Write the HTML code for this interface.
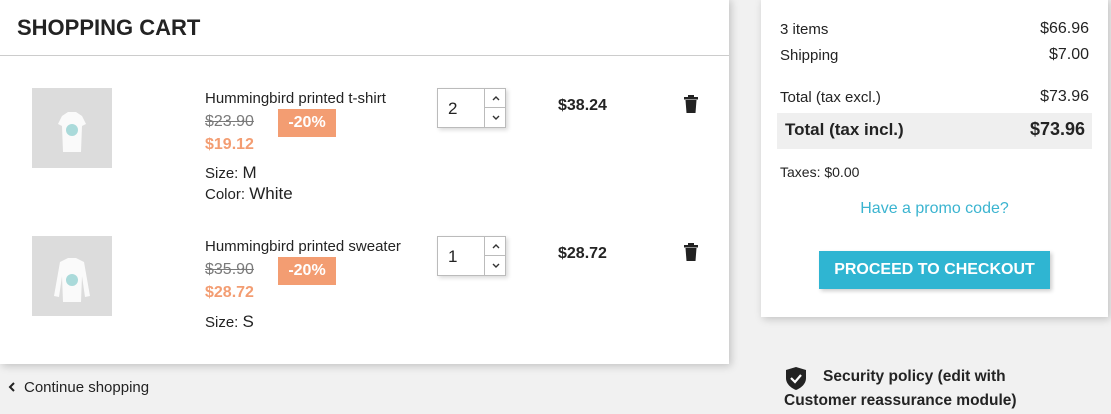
<!DOCTYPE html>
<html><head><meta charset="utf-8"><style>
*{margin:0;padding:0;box-sizing:border-box}
body{width:1111px;height:414px;background:#f1f1f1;font-family:"Liberation Sans",sans-serif;color:#232323;position:relative;overflow:hidden;font-size:15px}
.abs{position:absolute;white-space:nowrap}
.card{background:#fff;box-shadow:2px 2px 8px rgba(0,0,0,.2)}
.img{background:#dcdcdc;width:80px;height:80px}
.qty{width:69px;height:40px;border:1px solid #bbb;background:#fff;box-shadow:2px 2px 4px rgba(0,0,0,.15)}
.qty .n{position:absolute;left:10px;top:10px;font-size:17px}
.qty .s{position:absolute;left:46px;top:0;width:22px;height:38px;border-left:1px solid #bbb}
.qty .s div{height:19px;display:flex;align-items:center;justify-content:center}
.qty .s div:first-child{border-bottom:1px solid #bbb}
.badge{background:#f39d72;color:#fff;font-weight:bold;font-size:16px;text-align:center;line-height:28px;width:58px;height:28px}
.old{color:#7a7a7a;text-decoration:line-through;font-size:16px}
.new{color:#f39d72;font-weight:bold;font-size:16px}
</style></head><body>
<div class="abs card" style="left:0;top:-2px;width:729px;height:366px"></div>
<div class="abs" style="left:17px;top:15px;font-size:22px;font-weight:bold">SHOPPING CART</div>
<div class="abs" style="left:0;top:55px;width:729px;height:1px;background:#ccc"></div>

<div class="abs img" style="left:32px;top:88px"><svg width="80" height="80"><path d="M30 28 L36 24 L44 24 L50 28 L54 36 L50 38 L49 64 L31 64 L30 38 L26 36Z" fill="#fafafa"/><circle cx="40" cy="42" r="6" fill="#8cc" opacity=".7"/></svg></div>
<div class="abs" style="left:205px;top:90px;font-size:15px">Hummingbird printed t-shirt</div>
<div class="abs old" style="left:205px;top:113px">$23.90</div>
<div class="abs badge" style="left:278px;top:109px">-20%</div>
<div class="abs new" style="left:205px;top:136px">$19.12</div>
<div class="abs" style="left:205px;top:163px">Size: <span style="font-size:17px">M</span></div>
<div class="abs" style="left:205px;top:184px">Color: <span style="font-size:17px">White</span></div>
<div class="abs qty" style="left:437px;top:88px"><span class="n">2</span><div class="s"><div><svg width="8" height="5"><path d="M1 4 L4 1 L7 4" stroke="#333" stroke-width="1.4" fill="none"/></svg></div><div><svg width="8" height="5"><path d="M1 1 L4 4 L7 1" stroke="#333" stroke-width="1.4" fill="none"/></svg></div></div></div>
<div class="abs" style="left:558px;top:97px;font-weight:bold;font-size:16px">$38.24</div>
<svg class="abs" style="left:684px;top:95px" width="14" height="18"><rect x="0" y="2" width="14" height="2.5" fill="#222"/><rect x="4" y="0" width="6" height="2" fill="#222"/><path d="M1.5 5 H12.5 L11.5 18 H2.5Z" fill="#222"/></svg>

<div class="abs img" style="left:32px;top:236px"><svg width="80" height="80"><path d="M28 26 L36 22 L44 22 L52 26 L58 60 L53 61 L50 40 L49 66 L31 66 L30 40 L27 61 L22 60Z" fill="#fafafa"/><circle cx="40" cy="44" r="6" fill="#8cc" opacity=".7"/></svg></div>
<div class="abs" style="left:205px;top:238px">Hummingbird printed sweater</div>
<div class="abs old" style="left:205px;top:261px">$35.90</div>
<div class="abs badge" style="left:278px;top:257px">-20%</div>
<div class="abs new" style="left:205px;top:284px">$28.72</div>
<div class="abs" style="left:205px;top:312px">Size: <span style="font-size:17px">S</span></div>
<div class="abs qty" style="left:437px;top:236px"><span class="n">1</span><div class="s"><div><svg width="8" height="5"><path d="M1 4 L4 1 L7 4" stroke="#333" stroke-width="1.4" fill="none"/></svg></div><div><svg width="8" height="5"><path d="M1 1 L4 4 L7 1" stroke="#333" stroke-width="1.4" fill="none"/></svg></div></div></div>
<div class="abs" style="left:558px;top:245px;font-weight:bold;font-size:16px">$28.72</div>
<svg class="abs" style="left:684px;top:243px" width="14" height="18"><rect x="0" y="2" width="14" height="2.5" fill="#222"/><rect x="4" y="0" width="6" height="2" fill="#222"/><path d="M1.5 5 H12.5 L11.5 18 H2.5Z" fill="#222"/></svg>

<div class="abs" style="left:8px;top:379px;font-size:15px"><svg width="8" height="10" style="margin-right:8px"><path d="M6 1 L2 5 L6 9" stroke="#232323" stroke-width="2" fill="none"/></svg>Continue shopping</div>

<div class="abs card" style="left:761px;top:-2px;width:347px;height:319px"></div>
<div class="abs" style="left:780px;top:21px">3 items</div><div class="abs" style="right:22px;top:20px;font-size:16px">$66.96</div>
<div class="abs" style="left:780px;top:47px">Shipping</div><div class="abs" style="right:22px;top:46px;font-size:16px">$7.00</div>
<div class="abs" style="left:780px;top:89px">Total (tax excl.)</div><div class="abs" style="right:22px;top:88px;font-size:16px">$73.96</div>
<div class="abs" style="left:777px;top:113px;width:315px;height:36px;background:#efefef"></div>
<div class="abs" style="left:785px;top:120px;font-weight:bold;font-size:17px">Total (tax incl.)</div>
<div class="abs" style="right:26px;top:119px;font-weight:bold;font-size:18px">$73.96</div>
<div class="abs" style="left:780px;top:164px;font-size:14px">Taxes: $0.00</div>
<div class="abs" style="left:761px;width:347px;top:200px;text-align:center;color:#3bb4d0;font-size:16px">Have a promo code?</div>
<div class="abs" style="left:819px;top:251px;width:231px;height:38px;background:#2fb5d2;color:#fff;font-weight:bold;font-size:16px;text-align:center;line-height:38px;box-shadow:2px 2px 4px rgba(0,0,0,.2)">PROCEED TO CHECKOUT</div>
<svg class="abs" style="left:786px;top:367px" width="20" height="23"><path d="M10 0 L20 3 V11 C20 17 15 21 10 23 C5 21 0 17 0 11 V3Z" fill="#232323"/><path d="M5 11 L9 15 L15 8" stroke="#fff" stroke-width="2.2" fill="none"/></svg>
<div class="abs" style="left:823px;top:368px;font-weight:bold;font-size:15.5px">Security policy (edit with</div>
<div class="abs" style="left:784px;top:392px;font-weight:bold;font-size:15.5px">Customer reassurance module)</div>
</body></html>
